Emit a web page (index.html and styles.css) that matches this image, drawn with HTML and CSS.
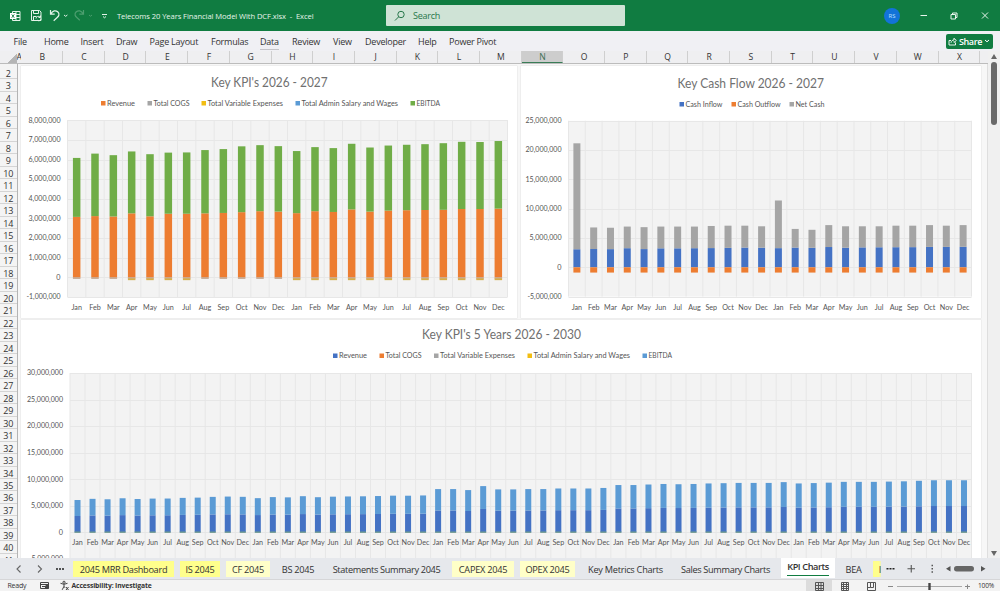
FILE: index.html
```html
<!DOCTYPE html>
<html lang="en">
<head>
<meta charset="utf-8">
<title>Telecoms 20 Years Financial Model With DCF.xlsx - Excel</title>
<link rel="stylesheet" href="styles.css">
</head>
<body>
<div class="app">
  <header class="titlebar">
    <div class="quick">
      <svg class="quick-icons" viewBox="0 0 112 31" width="112" height="31" fill="none" stroke="#e4f3e9" stroke-width="1">
        <path d="M12.5 11.5h7.500v9h-7.500z M16 11.500v9 M12.500 14.500h7.500 M16 17.500h4"/><rect x="10" y="13" width="6" height="6" fill="#fff" stroke="none"/><path d="M11.700 14.400l2.600 3.400M14.300 14.400l-2.600 3.400" stroke="#107c41" stroke-width=".9"/>
        <path d="M31.500 10.500h8l1.500 1.500v8.500h-9.500z M33.500 10.500v3h5v-3 M33.500 20.500v-4h3"/><path d="M36 18.500a2.300 2.300 0 0 1 4-1.400M40.500 15.500v2h-2M41 18.800a2.300 2.300 0 0 1-4 1.200"/>
        <path d="M50.500 10v4.200h4.200 M50.700 14c2-3.500 5-3.900 7-2.200 2.400 2.300 1 4.300-.5 5.700l-3.500 3.200" stroke-width="1.200"/><path d="M64 15l1.700 1.300L67.400 15"/>
        <g stroke="#4c9e6f"><path d="M83.500 10v4.200h-4.200 M83.300 14c-2-3.500-5-3.900-7-2.200-2.400 2.300-1 4.300.5 5.700l3 2.700" stroke-width="1.200"/><path d="M89 15l1.500 1.200L92 15"/></g>
        <path d="M102 14.500h5M103 16.500l1.500 1.300 1.500-1.300"/>
      </svg>
      <span class="doc-title">Telecoms 20 Years Financial Model With DCF.xlsx &nbsp;- &nbsp;Excel</span>
    </div>
    <div class="search">
      <svg viewBox="0 0 12 12" width="12" height="12" fill="none" stroke="#27774a" stroke-width="1"><circle cx="7" cy="4.500" r="3.200"/><path d="M4.600 6.900L1 10.500"/></svg>
      <span>Search</span>
    </div>
    <div class="window-tools">
      <span class="avatar">RS</span>
      <svg viewBox="0 0 80 31" width="80" height="31" fill="none" stroke="#e8f5ec" stroke-width="1"><path d="M8.500 15.500h6.500"/><path d="M39 14.500h4.500v4.500H39zM40.500 14.500v-1.500h4.500v4.500h-1.500"/><path d="M70 12.500l6 6M76 12.500l-6 6"/></svg>
    </div>
  </header>

  <nav class="menu">
    <span class="m-file">File</span><span class="m-home">Home</span><span class="m-insert">Insert</span><span class="m-draw">Draw</span><span class="m-page">Page Layout</span><span class="m-formulas">Formulas</span><span class="m-data"><u>Data</u></span><span class="m-review">Review</span><span class="m-view">View</span><span class="m-dev">Developer</span><span class="m-help">Help</span><span class="m-power">Power Pivot</span>
    <button class="share">
      <svg viewBox="0 0 9 9" width="9" height="9" fill="none" stroke="#fff" stroke-width=".9"><path d="M3 3.500H1v4.500h6.500V5.500M3 5.800c.3-2 1.500-2.800 3-2.800V1.200l2.300 2.300L6 5.500V4.300"/></svg>
      <b>Share</b>
      <svg viewBox="0 0 6 6" width="6" height="6" fill="none" stroke="#fff"><path d="M1 2l2 1.800L5 2"/></svg>
    </button>
  </nav>

  <main class="workspace">
    <div class="sheet">
      <div class="col-heads" id="cols"><div class="corner"></div><div class="col col-a">A</div></div>
      <div class="sheet-body">
        <div class="row-heads" id="rows"></div>
        <div class="canvas">
          <section class="card card-kpi"><svg id="kpi" viewBox="21 66 496 252" width="496" height="252"></svg></section>
          <section class="card card-cash"><svg id="cash" viewBox="521 66 460 252" width="460" height="252"></svg></section>
          <section class="card card-five"><svg id="five" viewBox="21 320 960 238" width="960" height="238"></svg></section>
        </div>
      </div>
    </div>
    <div class="vscroll"><i class="up"></i><i class="vthumb"></i><i class="down"></i></div>
  </main>

  <footer class="tabs">
    <div class="tab-nav"><svg viewBox="0 0 73 21" width="73" height="21" fill="none" stroke="#666" stroke-width="1.100"><path d="M20.500 7.500l-3.500 3.500 3.500 3.500M38 7.500l3.500 3.500-3.500 3.500"/><path d="M56 11h2M59 11h2M62 11h2" stroke="#222" stroke-width="1.600"/></svg></div>
    <div class="tab t-mrr">2045 MRR Dashboard</div>
    <div class="tab t-is">IS 2045</div>
    <div class="tab t-cf">CF 2045</div>
    <div class="tab t-bs">BS 2045</div>
    <div class="tab t-stat">Statements Summary 2045</div>
    <div class="tab t-capex">CAPEX 2045</div>
    <div class="tab t-opex">OPEX 2045</div>
    <div class="tab t-key">Key Metrics Charts</div>
    <div class="tab t-sales">Sales Summary Charts</div>
    <div class="tab t-kpi"><span>KPI Charts</span></div>
    <div class="tab t-bea">BEA</div>
    <div class="tab t-cut">I</div>
    <svg class="tab-tools" viewBox="881 0 119 21" width="119" height="21" fill="#555"><path d="M886.500 10h2v1.500h-2zM889.500 10h2v1.500h-2zM892.500 10h2v1.500h-2z" fill="#222"/><path d="M907.500 10.200h7.500v1.100h-7.500zM910.700 7h1.100v7.500h-1.100z"/><path d="M931.500 6.800h1.500v1.500h-1.500zM931.500 10h1.500v1.500h-1.500zM931.500 13.200h1.500v1.500h-1.500z"/><path d="M950.500 8v5.500l-4.500-2.700zM981 8v5.500l4.500-2.700z"/><rect x="954" y="8" width="20" height="5.500" rx="2.700" fill="#666"/></svg>
  </footer>

  <div class="status">
    <span class="ready">Ready</span>
    <svg class="status-icons" viewBox="0 0 32 11" width="32" height="11" fill="none" stroke="#444" stroke-width="1"><path d="M3.500 2.500h8v6h-8zM3.500 4.500h8M5 6.500h3" /><circle cx="10" cy="7" r="1.700" fill="#444"/><path d="M23.500 3.300l3.500 1 3.500-1M27 4.300v2l-1.800 3.500M27 6.300l1 1.500M29 7l2.500 3M31.500 7l-2.500 3"/><circle cx="27" cy="2.300" r="1.100"/></svg>
    <b class="access">Accessibility: Investigate</b>
    <svg class="view-tools" viewBox="806 0 170 11" width="170" height="11" fill="none" stroke="#555" stroke-width="1"><rect x="806" y="0" width="26" height="11" fill="#dcdcdc" stroke="none"/><path d="M815.500 2.500h8v8h-8zM815.500 5.500h8M815.500 8.500h8M818.500 2.500v8M821 2.500v8"/><path d="M841.500 2.500h7v8h-7zM843.500 2.500v8M846.500 2.500v8M841.500 4.500h7M841.500 6.500h7M841.500 8.500h7"/><path d="M867.500 2.500h8v8h-8zM870.500 2.500v5h3v-5M867.500 7.500h3"/><path d="M888 6.500h5M965 6.500h5M967.500 4.500v4.500" stroke="#888"/><path d="M897 6.500h65" stroke="#aaa"/><path d="M929.500 3v7" stroke="#444" stroke-width="2.400"/></svg>
    <span class="zoom">100%</span>
  </div>
</div>
<script src="charts.js"></script>
</body>
</html>
```
FILE: styles.css
```css
* { box-sizing: border-box; }
body { margin: 0; overflow: hidden; background: #fff; font-family: "Open Sans", "Noto Sans", sans-serif; color: #333; }
.app { width: 1000px; height: 591px; display: flex; flex-direction: column; }

.titlebar { height: 31px; flex: none; background: #107c41; display: grid; grid-template-columns: 386px 239px 1fr; align-items: center; }
.quick { display: flex; align-items: center; }
.quick-icons { flex: none; margin-right: 5px; }
.doc-title { color: #e6f4eb; font-size: 7.6px; letter-spacing: -.08px; white-space: nowrap; }
.search { height: 21px; background: #cfe3d6; border-radius: 1px; display: flex; align-items: center; gap: 7px; padding-left: 8px; font-size: 9px; letter-spacing: -.25px; color: #27774a; }
.window-tools { display: flex; align-items: center; justify-content: flex-end; gap: 12px; padding-right: 8px; }
.avatar { width: 16px; height: 16px; border-radius: 50%; background: #1273d8; color: #bfe0ff; font-size: 6px; display: grid; place-items: center; }

.menu { height: 20px; flex: none; background: #f0f0f4; display: flex; align-items: center; padding: 0 7px 0 13.5px; font-size: 9px; letter-spacing: -.22px; white-space: nowrap; }
.menu span { flex: none; }
.menu u { text-decoration: none; border-bottom: 1px solid #c4c4c8; padding-bottom: 1px; }
.m-file { width: 30.5px; } .m-home { width: 36.5px; } .m-insert { width: 35.5px; } .m-draw { width: 33.5px; }
.m-page { width: 61.5px; } .m-formulas { width: 49px; } .m-data { width: 32px; } .m-review { width: 41px; }
.m-view { width: 32px; } .m-dev { width: 53px; } .m-help { width: 31px; } .m-power { width: 60px; }
.share { margin-left: auto; width: 47px; height: 15px; border: 0; border-radius: 2px; background: #107c41; color: #fff; font: 9px "Open Sans", sans-serif; letter-spacing: -.35px; display: flex; align-items: center; justify-content: space-between; padding: 0 3px 0 2px; }
.share b { font-weight: 600; }

.workspace { height: 507px; flex: none; display: flex; overflow: hidden; }
.sheet { width: 988px; flex: none; background: #f7f7f7; }
.col-heads { height: 13px; display: flex; background: #efeff1; border-bottom: 1px solid #bcbcbc; overflow: hidden; font-size: 8.6px; line-height: 13px; text-align: center; }
.corner { width: 17.400px; flex: none; background: linear-gradient(135deg, transparent 68%, #b5b5b5 69%); }
.col { width: 41.700px; flex: none; padding-left: 1px; border-right: 1px solid #cfcfcf; }
.col-a { width: 4px; padding: 0; overflow: hidden; text-indent: -1px; border-right: 0; }
.col.selected { background: #cdcdcd; border-bottom: 1px solid #397d57; color: #3c6e53; }
.sheet-body { display: flex; height: 494px; overflow: hidden; }
.row-heads { width: 17.500px; flex: none; padding-top: 3px; background: #f4f4f4; border-right: 1px solid #b4b4b4; font-size: 9px; letter-spacing: -.1px; text-align: center; }
.row { height: 12.490px; line-height: 13px; border-bottom: 1px solid #d4d4d4; }
.canvas { padding: 2px 0 0 3.500px; width: 970.500px; display: grid; grid-template-columns: 496px 460px; grid-template-rows: 252px 238px; column-gap: 4px; row-gap: 2px; background: #f7f7f7; border-right: 1px solid #dedede; }
.card { background: #fff; overflow: hidden; box-shadow: 0 0 0 .5px #e6e6e6; }
.card-five { grid-column: 1 / 3; }
.card svg { display: block; }
.vscroll { flex: 1; background: #f0f0f0; display: flex; flex-direction: column; align-items: center; }
.up { border: 3px solid transparent; border-top: 0; border-bottom: 5px solid #666; margin-top: 3px; }
.vthumb { width: 6px; height: 63px; border-radius: 3px; background: #6a6a6a; margin-top: 3px; }
.down { border: 3px solid transparent; border-bottom: 0; border-top: 5px solid #666; margin: auto 0 2px; }

.plot { fill: #f3f3f3; }
.grid { stroke: #e7e7e7; stroke-width: 1; fill: none; }
.axis { font: 7.200px Lato, "Open Sans", sans-serif; fill: #555; }
.legend { font: 7px Lato, "Open Sans", sans-serif; fill: #555; }
.chart-title { font: 13px Lato, "Open Sans", sans-serif; fill: #707070; }

.tabs { height: 22px; flex: none; display: flex; align-items: flex-start; background: #e6e8ec; border-bottom: 1px solid #d6d6d8; font-size: 9.200px; letter-spacing: -.26px; white-space: nowrap; }
.tab-nav { width: 73px; height: 21px; flex: none; }
.tab { height: 16px; line-height: 17px; margin-top: 3px; text-align: center; flex: none; }
.t-mrr { width: 101px; background: #ffff8c; letter-spacing: -.3px; }
.t-is { width: 40px; margin-left: 6px; background: #ffff8c; }
.t-cf { width: 44px; margin-left: 6px; background: #ffffc8; }
.t-bs { width: 56px; }
.t-stat { width: 121px; letter-spacing: -.35px; }
.t-capex { width: 62px; margin-left: 5px; background: #ffffc8; }
.t-opex { width: 55px; margin-left: 6px; background: #ffffc8; }
.t-key { width: 101px; }
.t-sales { width: 99px; letter-spacing: -.35px; }
.t-kpi { width: 54px; margin-top: 0; margin-left: 6px; height: 20px; background: #fff; font-weight: 600; letter-spacing: -.42px; line-height: 18px; display: flex; justify-content: center; }
.t-kpi span { height: 18px; border-bottom: 1px solid #107c41; }
.t-bea { width: 37px; }
.t-cut { width: 8px; margin-left: 1px; background: linear-gradient(90deg, #ffff8c 70%, #f1f1ba); overflow: hidden; text-align: right; }
.tab-tools { flex: none; }

.status { height: 11px; flex: none; background: #f3f3f3; display: flex; align-items: center; font-size: 7px; line-height: 11px; letter-spacing: -.2px; padding-left: 7.500px; white-space: nowrap; }
.ready { width: 29.500px; }
.access { margin-left: 2.500px; font-weight: 700; font-size: 6.800px; letter-spacing: -.13px; }
.view-tools { margin-left: auto; }
.zoom { width: 24px; padding-left: 2px; font-size: 6.600px; }
```
FILE: charts.js
```js
const MONTHS = ['Jan', 'Feb', 'Mar', 'Apr', 'May', 'Jun', 'Jul', 'Aug', 'Sep', 'Oct', 'Nov', 'Dec'];
const BLUE = '#4472c4', ORANGE = '#ed7d31', GREY = '#a5a5a5', GOLD = '#f2bd12', SKY = '#5b9bd5', GREEN = '#70ad47';

// Column and row headings
'BCDEFGHIJKLMNOPQRSTUVWX'.split('').forEach(c => {
  document.getElementById('cols').insertAdjacentHTML('beforeend', `<div class="col${c === 'N' ? ' selected' : ''}">${c}</div>`);
});
for (let r = 2; r <= 41; r++) {
  document.getElementById('rows').insertAdjacentHTML('beforeend', `<div class="row">${r}</div>`);
}

const rect = (x, y, w, h, fill) => `<rect x="${x}" y="${y}" width="${w}" height="${h}" fill="${fill}"/>`;
const fit = (cls, x, y, w, s) => `<text class="${cls}" x="${x}" y="${y}" textLength="${w}" lengthAdjust="spacingAndGlyphs">${s}</text>`;

function drawChart(o) {
  const pitch = (o.right - o.left) / o.count;
  const yOf = v => o.zero - v * o.unit;
  const bottom = yOf(o.min), top = yOf(o.max);
  let s = `<rect class="plot" x="${o.left}" y="${top}" width="${o.right - o.left}" height="${bottom - top}"/>`;
  let d = '';
  for (let v = o.min; v <= o.max; v += o.step) d += `M${o.left} ${Math.round(yOf(v)) + .5}H${o.right}`;
  for (let i = 0; i <= o.count; i++) d += `M${o.left + i * pitch} ${top}V${bottom}`;
  s += `<path class="grid" d="${d}"/>`;
  for (let v = o.min; v <= o.max; v += o.step) {
    const label = (v * 1e6).toLocaleString('en-US');
    const w = v === 0 ? 4.2 : Math.abs(v) >= 10 ? 36 : v < 0 ? 34 : 32;
    s += fit('axis', o.axisRight - w, yOf(v) + 2.3, w, label);
  }
  for (let i = 0; i < o.count; i++) {
    const cx = o.left + (i + .5) * pitch, x = cx - o.bar / 2;
    o.stack(i).forEach(([a, b, c]) => { s += rect(x, yOf(b), o.bar, (b - a) * o.unit, c); });
    s += `<text class="axis" text-anchor="middle" x="${cx}" y="${o.labelY}">${MONTHS[i % 12]}</text>`;
  }
  s += fit('chart-title', ...o.title);
  o.legend.forEach(([x, w, name, c]) => {
    s += rect(x, o.legendY - 2.5, 4.5, 4.5, c) + fit('legend', x + 6, o.legendY + 2.3, w, name);
  });
  document.getElementById(o.id).innerHTML = s;
}

const total = [6.08, 6.30, 6.22, 6.41, 6.27, 6.35, 6.36, 6.48, 6.53, 6.67, 6.73, 6.68, 6.43, 6.63, 6.58, 6.80, 6.61, 6.71, 6.75, 6.78, 6.83, 6.90, 6.89, 6.94];
const revenue = [3.08, 3.12, 3.10, 3.26, 3.11, 3.24, 3.24, 3.26, 3.28, 3.32, 3.37, 3.35, 3.27, 3.37, 3.33, 3.46, 3.35, 3.40, 3.42, 3.43, 3.44, 3.48, 3.48, 3.50];
const withGold = i => i >= 12 || (i > 2 && i < 7);

drawChart({
  id: 'kpi', left: 67.5, right: 507.5, zero: 277.4, unit: 19.65, min: -1, max: 8, step: 1, count: 24, bar: 7.5,
  axisRight: 60.5, labelY: 309.5, title: [211, 86.5, 116.5, "Key KPI's 2026 - 2027"], legendY: 103.5,
  legend: [[101, 28, 'Revenue', ORANGE], [147.5, 36, 'Total COGS', GREY], [201.5, 75.5, 'Total Variable Expenses', GOLD], [295.5, 96.5, 'Total Admin Salary and Wages', SKY], [410.5, 23.5, 'EBITDA', GREEN]],
  stack: i => [[0, revenue[i], ORANGE], [revenue[i], total[i], GREEN], [-.07, 0, '#bd9a80'], ...(withGold(i) ? [[-.14, -.05, '#d8ae4a']] : [])]
});

const cash = [21.16, 6.8, 6.75, 6.95, 6.85, 6.95, 6.95, 6.95, 7.05, 7.1, 7.1, 7.0, 11.4, 6.55, 6.4, 7.2, 7.0, 7.0, 7.0, 7.1, 7.1, 7.2, 7.1, 7.2];
drawChart({
  id: 'cash', left: 568.5, right: 971.5, zero: 267.3, unit: 5.86, min: -5, max: 25, step: 5, count: 24, bar: 7,
  axisRight: 561.5, labelY: 309.5, title: [677.5, 87.5, 146.5, 'Key Cash Flow 2026 - 2027'], legendY: 104.5,
  legend: [[679.5, 37, 'Cash Inflow', BLUE], [731.5, 43, 'Cash Outflow', ORANGE], [789.5, 29, 'Net Cash', GREY]],
  stack: i => { const r = revenue[i]; return [[0, r, BLUE], [r, cash[i], GREY], [-.9, 0, ORANGE]]; }
});

const five = total.concat(
  [8.14, 8.14, 7.95, 8.7, 8.08, 8.08, 8.14, 8.14, 8.25, 8.25, 8.25, 8.35],
  [8.9, 8.9, 9.0, 9.1, 9.05, 9.1, 9.2, 9.25, 9.3, 9.3, 9.3, 9.45],
  [9.2, 9.27, 9.35, 9.5, 9.5, 9.5, 9.55, 9.6, 9.7, 9.8, 9.8, 9.8]);
drawChart({
  id: 'five', left: 70, right: 971.5, zero: 532.3, unit: 5.31, min: -5, max: 30, step: 5, count: 60, bar: 6,
  axisRight: 63, labelY: 544.6, title: [422, 339, 159, "Key KPI's 5 Years 2026 - 2030"], legendY: 356,
  legend: [[333, 28, 'Revenue', BLUE], [379.5, 36, 'Total COGS', ORANGE], [434, 75, 'Total Variable Expenses', GREY], [527.5, 96.5, 'Total Admin Salary and Wages', GOLD], [642.5, 23.5, 'EBITDA', SKY]],
  stack: i => { const r = five[i] * .505; return [[0, r, BLUE], [r, five[i], SKY], [-.1, .15, '#6f9a8c']]; }
});
```
